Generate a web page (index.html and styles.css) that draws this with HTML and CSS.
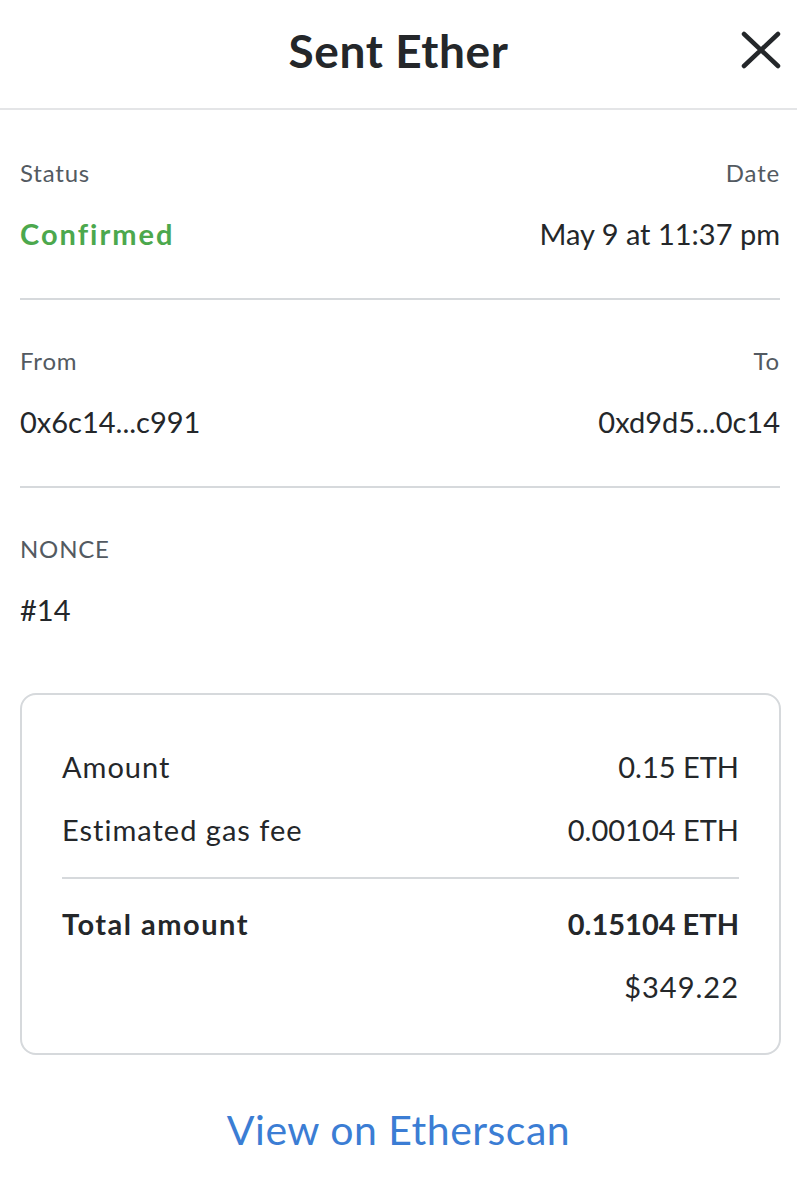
FILE: index.html
```html
<!DOCTYPE html>
<html lang="en">
<head>
  <meta charset="UTF-8" />
  <meta name="viewport" content="width=device-width, initial-scale=1.0"/>
  <title>Sent Ether</title>
  <link rel="stylesheet" href="styles.css">
</head>
<body>

  <header class="header">
    <h1 class="title">Sent Ether</h1>
    <button class="close" aria-label="Close">
      <svg width="40" height="38" viewBox="0 0 40 38">
        <path d="M3 3 L37 35 M37 3 L3 35" stroke="#24272a" stroke-width="4.5" stroke-linecap="round" fill="none"/>
      </svg>
    </button>
  </header>

  <section class="section divided first">
    <div class="row labels"><span>Status</span><span>Date</span></div>
    <div class="row values"><span class="status">Confirmed</span><span>May 9 at 11:37 pm</span></div>
  </section>

  <section class="section divided">
    <div class="row labels"><span>From</span><span>To</span></div>
    <div class="row values"><span>0x6c14...c991</span><span>0xd9d5...0c14</span></div>
  </section>

  <section class="section">
    <div class="row labels"><span>NONCE</span></div>
    <div class="row values"><span>#14</span></div>
  </section>

  <div class="summary">
    <div class="row line"><span>Amount</span><span>0.15 ETH</span></div>
    <div class="row line"><span>Estimated gas fee</span><span>0.00104 ETH</span></div>
    <hr class="rule">
    <div class="row line total"><span>Total amount</span><span>0.15104 ETH</span></div>
    <div class="row line fiat"><span>$349.22</span></div>
  </div>

  <a class="etherscan" href="#">View on Etherscan</a>

</body>
</html>
```

FILE: styles.css
```css
body {
  margin: 0;
  font-family: Lato, 'Noto Sans', sans-serif;
  background-color: #ffffff;
  color: #24272a;
}

.header {
  position: relative;
  height: 108px;
  border-bottom: 2px solid #e4e5e7;
  display: flex;
  align-items: center;
  justify-content: center;
}

.title {
  margin: 0 0 8px;
  font-size: 46px;
  font-weight: 700;
  letter-spacing: 0.6px;
  color: #24272a;
}

.close {
  position: absolute;
  right: 16px;
  top: 31px;
  padding: 0;
  border: none;
  background: none;
}

.close svg {
  display: block;
}

.row {
  display: flex;
  justify-content: space-between;
  align-items: center;
}

.section {
  padding: 46px 17px 46px 20px;
}

.section.first {
  padding-top: 48px;
}

.section.divided {
  margin: 0 17px 0 20px;
  padding-left: 0;
  padding-right: 0;
  border-bottom: 2px solid #d6d9dc;
}

.labels {
  font-size: 24px;
  line-height: 30px;
  letter-spacing: 0.8px;
  color: #535a61;
}

.values {
  margin-top: 28px;
  font-size: 29px;
  line-height: 36px;
}

.status {
  color: #4ca84d;
  font-weight: 700;
  letter-spacing: 2px;
}

.summary {
  margin: 19px 16px 0 20px;
  padding: 54px 40px 48px 40px;
  border: 2px solid #d6d9dc;
  border-radius: 16px;
}

.line {
  font-size: 29px;
  line-height: 36px;
}

.line span:first-child {
  letter-spacing: 1px;
}

.line + .line {
  margin-top: 27px;
}

.rule {
  margin: 29px 0 27px;
  border: none;
  border-top: 2px solid #d6d9dc;
}

.total {
  font-weight: 700;
}

.total span:first-child {
  letter-spacing: 1.5px;
}

.fiat {
  justify-content: flex-end;
}

.etherscan {
  display: block;
  margin-top: 51px;
  text-align: center;
  font-size: 41px;
  line-height: 48px;
  letter-spacing: 0.5px;
  color: #3b7dd4;
  text-decoration: none;
}
```
